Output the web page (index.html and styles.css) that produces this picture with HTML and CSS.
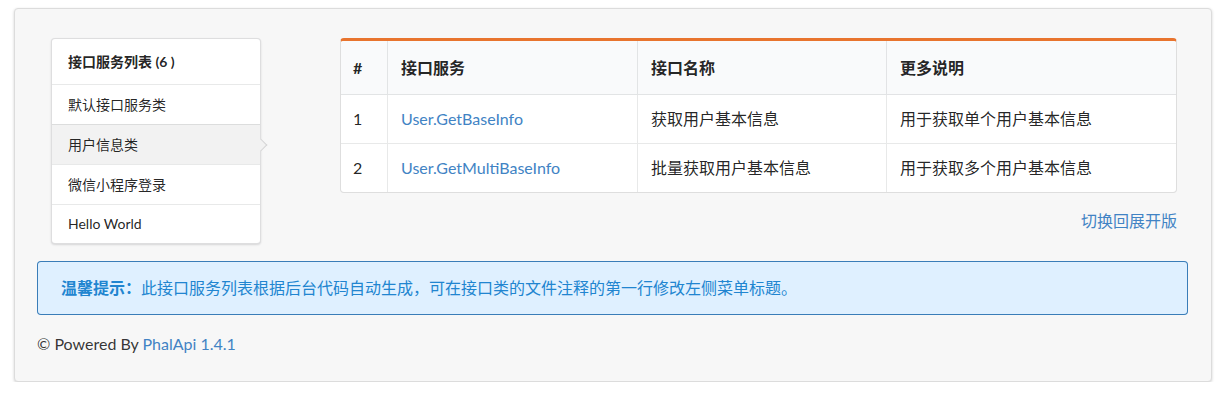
FILE: index.html
```html
<!DOCTYPE html>
<html lang="zh-CN">
<head>
<meta charset="utf-8">
<title>接口服务列表</title>
<link rel="stylesheet" href="styles.css">
</head>
<body>
<div class="segment">
  <div class="grid">
    <div class="side">
      <div class="menu">
        <div class="item header">接口服务列表 (6 )</div>
        <a class="item">默认接口服务类</a>
        <a class="item active">用户信息类</a>
        <a class="item">微信小程序登录</a>
        <a class="item">Hello World</a>
      </div>
    </div>
    <div class="main">
      <table class="api-table">
        <colgroup>
          <col class="c1"><col class="c2"><col class="c3"><col class="c4">
        </colgroup>
        <thead>
          <tr><th>#</th><th>接口服务</th><th>接口名称</th><th>更多说明</th></tr>
        </thead>
        <tbody>
          <tr><td>1</td><td><a class="link">User.GetBaseInfo</a></td><td>获取用户基本信息</td><td>用于获取单个用户基本信息</td></tr>
          <tr><td>2</td><td><a class="link">User.GetMultiBaseInfo</a></td><td>批量获取用户基本信息</td><td>用于获取多个用户基本信息</td></tr>
        </tbody>
      </table>
      <div class="toggle"><a class="link">切换回展开版</a></div>
    </div>
  </div>
  <div class="message"><b>温馨提示：</b>此接口服务列表根据后台代码自动生成，可在接口类的文件注释的第一行修改左侧菜单标题。</div>
  <p class="footer">© Powered By <a class="link">PhalApi 1.4.1</a></p>
</div>
</body>
</html>
```

FILE: styles.css
```css
* { box-sizing: border-box; }

body {
  margin: 0;
  background: #fff;
  font-family: Lato, "Noto Sans CJK SC", sans-serif;
  font-size: 14px;
  color: rgba(0, 0, 0, 0.87);
}

.segment {
  margin: 8px 12px 0 14px;
  background: #f7f7f7;
  border: 1px solid #dcdcdc;
  border-radius: 4px;
  box-shadow: 0 1px 3px rgba(0, 0, 0, 0.18);
  padding: 29px 23px 26px 22px;
}

.grid {
  display: flex;
  align-items: flex-start;
}

.side {
  width: 303px;
  padding-left: 14px;
  flex: none;
}

.menu {
  width: 210px;
  background: #fff;
  border: 1px solid rgba(34, 36, 38, 0.15);
  border-radius: 4px;
  box-shadow: 0 1px 2px 0 rgba(34, 36, 38, 0.15);
}

.menu .item {
  display: block;
  position: relative;
  height: 40px;
  line-height: 39px;
  padding: 0 16px;
  border-top: 1px solid rgba(34, 36, 38, 0.1);
  color: rgba(0, 0, 0, 0.87);
  font-size: 14px;
}

.menu .item.header {
  height: 45px;
  line-height: 45px;
  border-top: none;
  font-weight: 700;
}

.menu .item:last-child { height: 39px; line-height: 38px; }

.menu .item.active {
  background: #f2f2f2;
}

.menu .item.active::after {
  content: "";
  position: absolute;
  top: 50%;
  right: 0;
  width: 8px;
  height: 8px;
  margin-right: -1px;
  background: #f2f2f2;
  border-top: 1px solid #d4d4d5;
  border-right: 1px solid #d4d4d5;
  transform: translateX(50%) translateY(-50%) rotate(45deg);
}

.main {
  flex: 1;
  padding-right: 11px;
}

.api-table {
  width: 837px;
  table-layout: fixed;
  border-collapse: separate;
  border-spacing: 0;
  background: #fff;
  border: 1px solid rgba(34, 36, 38, 0.15);
  border-top: 3px solid #e8742e;
  border-radius: 4px;
  font-size: 16px;
  color: rgba(0, 0, 0, 0.87);
}

.api-table .c1 { width: 46px; }
.api-table .c2 { width: 250px; }
.api-table .c3 { width: 249px; }
.api-table .c4 { width: 290px; }

.api-table th {
  text-align: left;
  font-weight: 700;
  background: #f9fafb;
  padding: 16px 12px 15px 13px;
  line-height: 22px;
  border-bottom: 1px solid rgba(34, 36, 38, 0.1);
}

.api-table td {
  padding: 13px 12px 13px 13px;
  line-height: 22px;
}

.api-table th:first-child,
.api-table td:first-child {
  padding-left: 12px;
}

.api-table th + th,
.api-table td + td {
  border-left: 1px solid rgba(34, 36, 38, 0.1);
}

.api-table tbody tr + tr td {
  border-top: 1px solid rgba(34, 36, 38, 0.1);
}

.api-table th:first-child { border-top-left-radius: 3px; }
.api-table th:last-child { border-top-right-radius: 3px; }

.link {
  color: #4183c4;
  text-decoration: none;
}

.toggle {
  margin-top: 17px;
  text-align: right;
  font-size: 16px;
  line-height: 22px;
}

.message {
  margin-top: 17px;
  padding: 16px 24px;
  line-height: 22px;
  font-size: 16px;
  background: #dff0ff;
  color: #2185d0;
  border-radius: 4px;
  box-shadow: inset 0 0 0 1px #3a7db8;
}

.message b { font-weight: 700; }

.footer {
  margin: 18px 0 0;
  font-size: 16px;
  line-height: 22px;
  color: rgba(0, 0, 0, 0.8);
}
```
